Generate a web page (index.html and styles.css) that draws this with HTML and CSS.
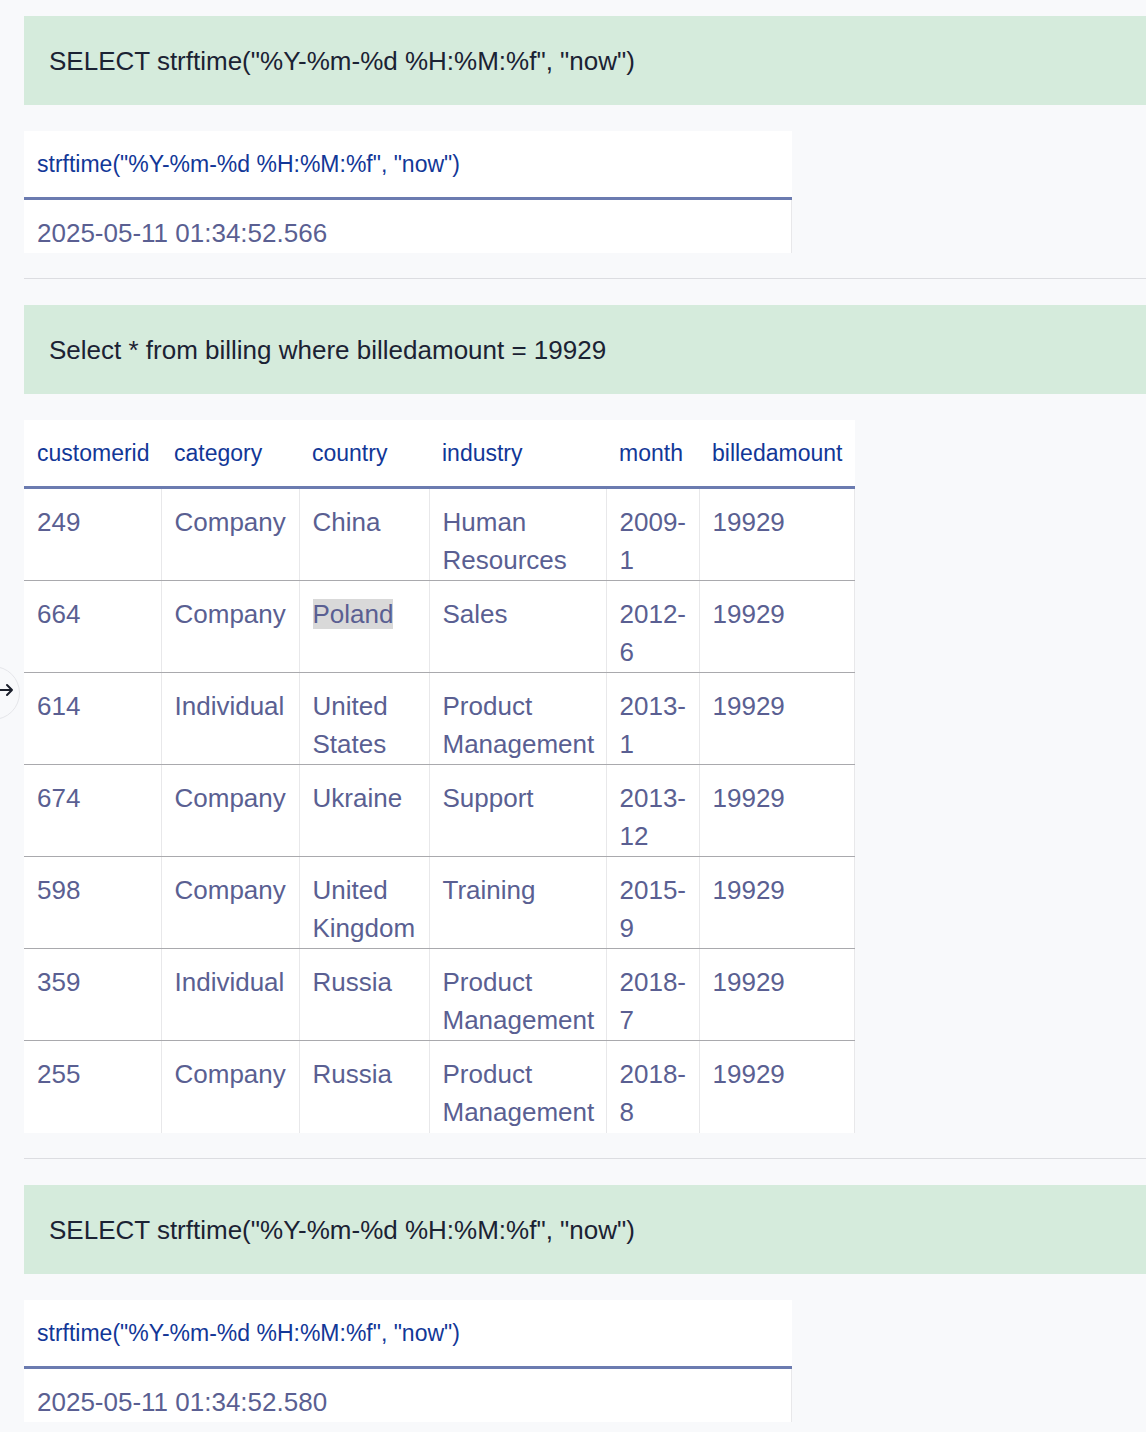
FILE: index.html
```html
<!DOCTYPE html>
<html>
<head>
<meta charset="utf-8">
<link rel="stylesheet" href="styles.css">
</head>
<body>
<button class="side-toggle" aria-label="toggle">
  <svg viewBox="0 0 20 20" width="20" height="20"><path d="M2 10h14M11 5l5 5-5 5" fill="none" stroke="#1b1f2b" stroke-width="2" stroke-linecap="round" stroke-linejoin="round"/></svg>
</button>
<main class="page">
  <section class="block">
    <div class="query">SELECT strftime("%Y-%m-%d %H:%M:%f", "now")</div>
    <table class="result narrow">
      <thead><tr><th>strftime("%Y-%m-%d %H:%M:%f", "now")</th></tr></thead>
      <tbody><tr><td>2025-05-11 01:34:52.566</td></tr></tbody>
    </table>
  </section>
  <section class="block">
    <div class="query">Select * from billing where billedamount = 19929</div>
    <table class="result wide">
      <colgroup>
        <col class="c1"><col class="c2"><col class="c3"><col class="c4"><col class="c5"><col class="c6">
      </colgroup>
      <thead>
        <tr><th>customerid</th><th>category</th><th>country</th><th>industry</th><th>month</th><th>billedamount</th></tr>
      </thead>
      <tbody>
        <tr><td>249</td><td>Company</td><td>China</td><td>Human Resources</td><td>2009-1</td><td>19929</td></tr>
        <tr><td>664</td><td>Company</td><td><span class="hl">Poland</span></td><td>Sales</td><td>2012-6</td><td>19929</td></tr>
        <tr><td>614</td><td>Individual</td><td>United States</td><td>Product Management</td><td>2013-1</td><td>19929</td></tr>
        <tr><td>674</td><td>Company</td><td>Ukraine</td><td>Support</td><td>2013-12</td><td>19929</td></tr>
        <tr><td>598</td><td>Company</td><td>United Kingdom</td><td>Training</td><td>2015-9</td><td>19929</td></tr>
        <tr><td>359</td><td>Individual</td><td>Russia</td><td>Product Management</td><td>2018-7</td><td>19929</td></tr>
        <tr><td>255</td><td>Company</td><td>Russia</td><td>Product Management</td><td>2018-8</td><td>19929</td></tr>
      </tbody>
    </table>
  </section>
  <section class="block">
    <div class="query">SELECT strftime("%Y-%m-%d %H:%M:%f", "now")</div>
    <table class="result narrow">
      <thead><tr><th>strftime("%Y-%m-%d %H:%M:%f", "now")</th></tr></thead>
      <tbody><tr><td>2025-05-11 01:34:52.580</td></tr></tbody>
    </table>
  </section>
</main>
</body>
</html>
```
FILE: styles.css
```css
html, body {
  margin: 0;
  padding: 0;
  background: #f8f9fb;
  font-family: "Liberation Sans", Arial, sans-serif;
  overflow: hidden;
}
.page {
  padding: 16px 0 0 24px;
}
.block {
  border-bottom: 1px solid #dcdde1;
  padding-bottom: 25px;
  margin-bottom: 26px;
}
.query {
  background: #d5ebdc;
  color: #1b2233;
  font-size: 26px;
  height: 89px;
  line-height: 91px;
  padding: 0 25px;
  white-space: nowrap;
}
.result {
  margin-top: 26px;
  border-collapse: collapse;
  background: #fff;
  table-layout: fixed;
}
.result.narrow { width: 768px; }
.result.wide { width: 830px; }
.c1 { width: 137px; }
.c2 { width: 138px; }
.c3 { width: 130px; }
.c4 { width: 177px; }
.c5 { width: 93px; }
.c6 { width: 155px; }
.result th {
  text-align: left;
  font-weight: normal;
  color: #123797;
  font-size: 23px;
  line-height: 38px;
  padding: 14px 13px 14px 13px;
  border-bottom: 3px solid #6b7bb0;
}
.result td {
  color: #5a5f92;
  font-size: 26px;
  line-height: 38px;
  padding: 14px 13px 1px 13px;
  vertical-align: top;
  border-left: 1px solid #e8e8ea;
  border-right: 1px solid #e8e8ea;
  border-bottom: 1px solid #a9a9ad;
}
.result td:first-child { border-left: none; }
.result tbody tr:last-child td { border-bottom: none; }
.result.wide tbody tr:last-child td { padding-bottom: 2px; }
.hl { background: #d9d9d9; }
.side-toggle {
  position: fixed;
  left: -34px;
  top: 666px;
  width: 54px;
  height: 54px;
  border-radius: 50%;
  border: 1px solid #e4e5e9;
  background: #f8f9fb;
  padding: 0 0 0 26px;
  display: flex;
  align-items: center;
  justify-content: center;
  z-index: 2;
}
.side-toggle svg { display: block; margin-top: -6px; }
```
